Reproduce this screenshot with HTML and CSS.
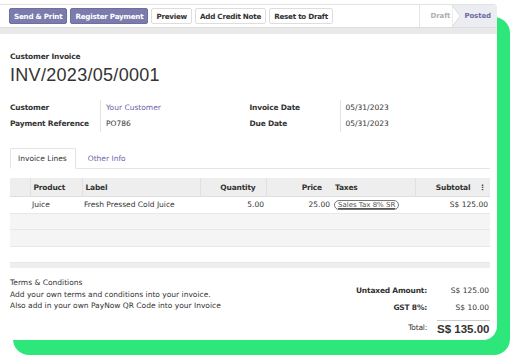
FILE: index.html
```html
<!DOCTYPE html>
<html lang="en">
<head>
    <meta charset="UTF-8">
    <title>INV/2023/05/0001</title>
    <link rel="stylesheet" href="styles.css">
</head>
<body>

<div class="stage">
    <div class="backdrop"></div>

    <div class="card">
        <!-- control panel -->
        <div class="control-bar">
            <div class="actions">
                <button class="btn btn-primary">Send &amp; Print</button>
                <button class="btn btn-primary">Register Payment</button>
                <button class="btn">Preview</button>
                <button class="btn">Add Credit Note</button>
                <button class="btn">Reset to Draft</button>
            </div>
            <div class="statusbar">
                <span class="status">Draft</span>
                <svg class="chevron" width="9" height="22" viewBox="0 0 9 22">
                    <polygon points="0,0 8,11 0,22" fill="#fff" stroke="#dcdcdc" stroke-width="1"/>
                </svg>
                <span class="status current">Posted</span>
            </div>
        </div>
        <div class="band"></div>

        <div class="sheet">
            <div class="doc-type">Customer Invoice</div>
            <h1 class="doc-name">INV/2023/05/0001</h1>

            <div class="fields">
                <div class="group">
                    <div class="label">Customer</div>
                    <div class="value link">Your Customer</div>
                    <div class="label">Payment Reference</div>
                    <div class="value">PO786</div>
                </div>
                <div class="group">
                    <div class="label">Invoice Date</div>
                    <div class="value">05/31/2023</div>
                    <div class="label">Due Date</div>
                    <div class="value">05/31/2023</div>
                </div>
            </div>

            <div class="tabs">
                <span class="tab active">Invoice Lines</span>
                <span class="tab">Other Info</span>
            </div>

            <table class="lines">
                <colgroup>
                    <col style="width: 20px">
                    <col style="width: 52px">
                    <col style="width: 118px">
                    <col style="width: 66px">
                    <col style="width: 66px">
                    <col style="width: 83px">
                    <col style="width: 75px">
                </colgroup>
                <thead>
                    <tr>
                        <th></th>
                        <th>Product</th>
                        <th>Label</th>
                        <th class="num">Quantity</th>
                        <th class="num">Price</th>
                        <th>Taxes</th>
                        <th class="num">Subtotal <span class="kebab">&#8942;</span></th>
                    </tr>
                </thead>
                <tbody>
                    <tr>
                        <td></td>
                        <td>Juice</td>
                        <td class="label-cell">Fresh Pressed Cold Juice</td>
                        <td class="num">5.00</td>
                        <td class="num">25.00</td>
                        <td><span class="tag">Sales Tax 8% SR</span></td>
                        <td class="num">S$ 125.00</td>
                    </tr>
                    <tr class="empty shade"><td colspan="7"></td></tr>
                    <tr class="empty shade"><td colspan="7"></td></tr>
                    <tr class="empty"><td colspan="7"></td></tr>
                </tbody>
                <tfoot>
                    <tr><td colspan="7"></td></tr>
                </tfoot>
            </table>

            <div class="bottom">
                <div class="terms">
                    <p>Terms &amp; Conditions</p>
                    <p>Add your own terms and conditions into your invoice.</p>
                    <p>Also add in your own PayNow QR Code into your Invoice</p>
                </div>
                <div class="totals">
                    <div class="t-label">Untaxed Amount:</div>
                    <div class="t-value">S$ 125.00</div>
                    <div class="t-label">GST 8%:</div>
                    <div class="t-value">S$ 10.00</div>
                    <div class="t-label total">Total:</div>
                    <div class="t-value total">S$ 135.00</div>
                </div>
            </div>
        </div>
    </div>
</div>

</body>
</html>
```

FILE: styles.css
```css
/* general */
body {
    margin: 0;
    padding: 0;
    background-color: #fff;
    font-family: 'DejaVu Sans', sans-serif;
    font-size: 7.5px;
    color: #333;
}

.stage {
    display: grid;
    width: 512px;
    height: 358px;
}

.backdrop,
.card {
    grid-area: 1 / 1;
}

.backdrop {
    margin: 17px 2px 3px 13px;
    background-color: #2de77b;
    border-radius: 16px;
}

.card {
    margin: 4px 15px 18px 0;
    background-color: #fff;
    border-top: 1px solid #e2e2e2;
    border-radius: 0 4px 14px 0;
    overflow: hidden;
    display: flex;
    flex-direction: column;
}

/* control panel */
.control-bar {
    display: flex;
    justify-content: space-between;
    align-items: center;
    height: 22px;
    padding-left: 9px;
}

.actions {
    display: flex;
    gap: 3px;
}

.btn {
    font-family: inherit;
    font-size: 7.2px;
    font-weight: bold;
    letter-spacing: -0.25px;
    color: #333;
    background-color: #fff;
    border: 1px solid #ddd;
    border-radius: 2px;
    height: 16px;
    padding: 0 4px;
}

.btn-primary {
    background-color: #7c7bad;
    border-color: #6f6ea3;
    color: #fff;
}

.statusbar {
    display: flex;
    align-items: stretch;
    height: 22px;
    border-left: 1px solid #e6e6e6;
}

.status {
    display: flex;
    align-items: center;
    font-size: 7px;
    font-weight: bold;
    letter-spacing: -0.1px;
    color: #b0b0b0;
    padding: 0 2px 0 10px;
}

.chevron {
    background-color: #ececf3;
}

.status.current {
    background-color: #ececf3;
    color: #6b6a9c;
    padding: 0 6px 0 3px;
}

.band {
    height: 6px;
    background-color: #e9e9e9;
    border-top: 1px solid #ddd;
}

/* sheet */
.sheet {
    padding: 18px 8px 0 10px;
}

.doc-type {
    font-weight: bold;
    letter-spacing: -0.2px;
}

.doc-name {
    margin: 4px 0 14px;
    font-family: 'Liberation Sans', sans-serif;
    font-size: 18px;
    font-weight: normal;
    letter-spacing: 0.3px;
    color: #333;
}

.fields {
    display: flex;
}

.group {
    display: grid;
    grid-template-columns: 90px auto;
    grid-auto-rows: 16px;
    width: 240px;
    line-height: 1;
}

.group .label {
    font-weight: bold;
    letter-spacing: -0.2px;
    align-self: center;
}

.group .value {
    align-self: stretch;
    display: flex;
    align-items: center;
    border-left: 1px solid #e4e4e4;
    padding-left: 5px;
}

.link {
    color: #6b66a8;
}

/* tabs */
.tabs {
    display: flex;
    margin-top: 16px;
    border-bottom: 1px solid #e4e4e4;
    width: 480px;
}

.tab {
    padding: 5px 8px 5px 7px;
    margin-bottom: -1px;
    color: #6b66a8;
    border: 1px solid transparent;
    border-radius: 2px 2px 0 0;
}

.tab.active {
    color: #333;
    border-color: #e4e4e4;
    border-bottom-color: #fff;
    background-color: #fff;
    margin-right: 4px;
}

/* lines table */
.lines {
    margin-top: 9px;
    width: 480px;
    border-collapse: collapse;
    table-layout: fixed;
}

.lines th {
    background-color: #eee;
    height: 18px;
    font-weight: bold;
    letter-spacing: -0.2px;
    text-align: left;
    padding: 0 3px;
    border-left: 1px solid #e0e0e0;
    border-bottom: 1px solid #ddd;
}

.lines th:first-child,
.lines th:nth-child(6) {
    border-left: none;
}

.lines td {
    height: 15.5px;
    padding: 0 2px;
    border-bottom: 1px solid #e8e8e8;
}

.lines .num {
    text-align: right;
}

.lines th.num {
    padding-right: 10px;
}

.lines th:last-child {
    padding-right: 4px;
}

.kebab {
    margin-left: 6px;
}

.label-cell {
    padding-left: 5px;
}

.tag {
    border: 1px solid #777;
    border-radius: 7px;
    padding: 0 3px;
    font-size: 7px;
    color: #555;
    text-decoration: underline;
}

.lines tr.shade td {
    background-color: #f5f5f5;
}

.lines tfoot td {
    height: 5px;
    background-color: #eee;
    border: none;
}

/* bottom */
.bottom {
    display: flex;
    justify-content: space-between;
    width: 480px;
    margin-top: 9px;
}

.terms p {
    margin: 0;
    line-height: 11.5px;
}

.totals {
    display: grid;
    grid-template-columns: auto 63px;
    align-items: center;
    row-gap: 8px;
    margin-top: 9px;
}

.t-label {
    text-align: right;
    font-weight: bold;
    letter-spacing: -0.2px;
}

.t-value {
    text-align: right;
    padding-right: 1px;
    white-space: nowrap;
}

.t-label.total {
    font-weight: normal;
}

.t-value.total {
    font-family: 'Liberation Sans', sans-serif;
    font-size: 11.5px;
    font-weight: bold;
    border-top: 1px solid #ccc;
    padding-top: 2px;
    margin-left: 10px;
}
```
